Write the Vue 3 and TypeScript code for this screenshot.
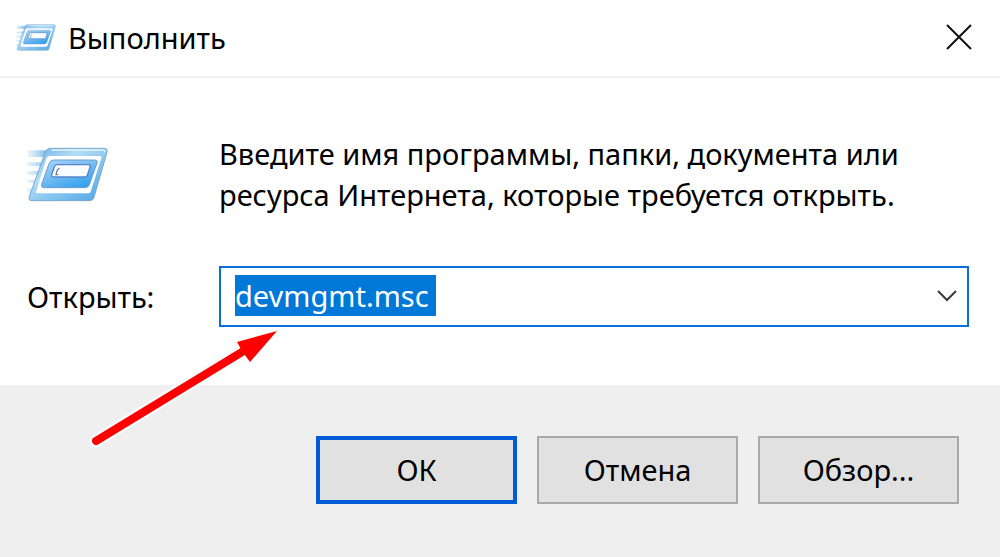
<script setup lang="ts">
import { onMounted, ref } from 'vue'

const command = ref<string>('devmgmt.msc ')
const field = ref<HTMLInputElement | null>(null)

onMounted(() => {
  field.value?.focus()
  field.value?.select()
})
</script>

<template>
  <main class="dialog">
    <header class="titlebar">
      <svg class="icon-small" viewBox="51 45 243 165" aria-hidden="true">
        <defs>
          <linearGradient id="frame" x1="0" y1="0" x2="1" y2="1">
            <stop offset="0" stop-color="#62ade3" />
            <stop offset="0.35" stop-color="#b4dcf6" />
            <stop offset="0.6" stop-color="#85c5ef" />
            <stop offset="1" stop-color="#4aa3e2" />
          </linearGradient>
          <linearGradient id="panel" x1="0" y1="0" x2="0.7" y2="1">
            <stop offset="0" stop-color="#a9d5f5" />
            <stop offset="0.5" stop-color="#78bdf0" />
            <stop offset="1" stop-color="#34a0ee" />
          </linearGradient>
          <linearGradient id="trail" x1="0" y1="0" x2="1" y2="0">
            <stop offset="0" stop-color="#b5dbf4" stop-opacity="0.3" />
            <stop offset="1" stop-color="#76b7e6" />
          </linearGradient>
        </defs>
        <g id="run-icon">
          <path d="M54 55H112L106 75H54ZM51 91H102L98 103H51ZM51 117H92L88 128H51ZM51 143H85L81 153H51ZM51 169H77L73 179H51Z" fill="url(#trail)" />
          <path d="M122 49H282Q294 49 291 60L252 196Q249 206 239 206H66Q54 206 58 194L106 60Q110 49 122 49Z" fill="url(#frame)" stroke="#79a7cf" stroke-width="3" />
          <path d="M124 54H279Q286 54 284 61" fill="none" stroke="#e0f3fd" stroke-width="4" />
          <path d="M118 72H271Q276 72 274 78L242 179Q240 184 234 184H83Q76 184 79 177L109 79Q111 72 118 72Z" fill="#fff" />
          <path d="M131 84H254Q264 84 261 93L238 158Q235 167 225 167H103Q92 167 95 157L117 95Q121 84 131 84Z" fill="url(#panel)" stroke="#6a9dd3" stroke-width="3" />
          <path d="M141 98H235Q242 98 240 105L232 130Q230 135 224 135H131Q123 135 125 128L133 105Q135 98 141 98Z" fill="#fafdff" stroke="#5485cc" stroke-width="4" />
          <path d="M148 108L142 114L138 128H144" fill="none" stroke="#71818c" stroke-width="4" />
        </g>
      </svg>
      <h1>Выполнить</h1>
      <button class="close" type="button" aria-label="Закрыть">
        <svg viewBox="0 0 26 26" aria-hidden="true"><path d="M1 1L25 25M25 1L1 25" /></svg>
      </button>
    </header>

    <form class="form" @submit.prevent>
      <section class="content">
        <svg class="icon-large" viewBox="51 45 243 165" aria-hidden="true"><use href="#run-icon" /></svg>
        <p>Введите имя программы, папки, документа или<br />ресурса Интернета, которые требуется открыть.</p>
        <label for="command">Открыть:</label>
        <div class="combo">
          <input id="command" ref="field" v-model="command" type="text" autocomplete="off" spellcheck="false" />
          <button class="drop" type="button" aria-label="Показать список">
            <svg viewBox="0 0 20 12" aria-hidden="true"><path d="M1 1L10 10L19 1" /></svg>
          </button>
          <svg class="arrow" viewBox="0 0 190 122" aria-hidden="true">
            <path class="halo" d="M8 114L150 27" />
            <path class="shaft" d="M8 114L154 25" />
            <path class="head" d="M189 4L149 15L154 24L162 35Z" />
          </svg>
        </div>
      </section>

      <footer class="actions">
        <button class="action primary" type="submit">ОК</button>
        <button class="action" type="button">Отмена</button>
        <button class="action" type="button">Обзор...</button>
      </footer>
    </form>
  </main>
</template>

<style>
html,
body,
#app {
  height: 100%;
}

body {
  margin: 0;
}
</style>

<style scoped>
.dialog {
  min-height: 100%;
  display: flex;
  flex-direction: column;
  background: #fff;
  color: #000;
  font-family: "Noto Sans", "Open Sans", sans-serif;
  font-size: 29px;
  line-height: 41px;
}

button,
input {
  font: inherit;
  color: inherit;
  border: 0;
  border-radius: 0;
  padding: 0;
  outline: 0;
}

svg {
  display: block;
}

.titlebar {
  display: flex;
  align-items: center;
  gap: 12px;
  height: 78px;
  padding: 0 28px 2px 16px;
  box-sizing: border-box;
  border-bottom: 2px solid #f1f1f1;
}

.icon-small {
  width: 40px;
  height: 27px;
}

h1 {
  margin: 0;
  flex: 1;
  font-size: 29px;
  font-weight: 400;
}

.close {
  background: none;
}

.close svg {
  width: 26px;
  height: 26px;
  fill: none;
  stroke: #111;
  stroke-width: 2;
}

.form {
  flex: 1;
  display: flex;
  flex-direction: column;
}

.content {
  display: grid;
  grid-template-columns: 192px 1fr;
  align-items: center;
  row-gap: 51px;
  padding: 55px 31px 58px 27px;
}

.icon-large {
  width: 81px;
  height: 55px;
}

p {
  margin: 0;
  white-space: nowrap;
}

.combo {
  position: relative;
  display: flex;
  align-items: center;
  height: 61px;
  box-sizing: border-box;
  border: 2px solid #0a6fd8;
  padding: 0 10px 2px 14px;
}

.combo input {
  flex: 1;
  min-width: 0;
  background: none;
}

.combo input::selection {
  background: #0078d7;
  color: #fff;
}

.drop {
  background: none;
}

.drop svg {
  width: 20px;
  height: 12px;
  fill: none;
  stroke: #3a3a3a;
  stroke-width: 2;
}

.arrow {
  position: absolute;
  left: -133px;
  top: 59px;
  width: 190px;
  height: 122px;
  fill: none;
  pointer-events: none;
}

.shaft {
  stroke: #f00;
  stroke-width: 8;
  stroke-linecap: round;
}

.halo {
  stroke: #f4fcfc;
  stroke-width: 13;
  stroke-linecap: round;
}

.head {
  fill: #f00;
}

.actions {
  flex: 1;
  display: flex;
  justify-content: flex-end;
  align-items: flex-start;
  gap: 20px;
  padding: 51px 41px 51px 20px;
  background: #efefef;
}

.action {
  width: 201px;
  height: 68px;
  padding-bottom: 2px;
  border: 2px solid #a9a9a9;
  background: #e1e1e1;
}

.primary {
  border: 4px solid #005bd5;
}
</style>
